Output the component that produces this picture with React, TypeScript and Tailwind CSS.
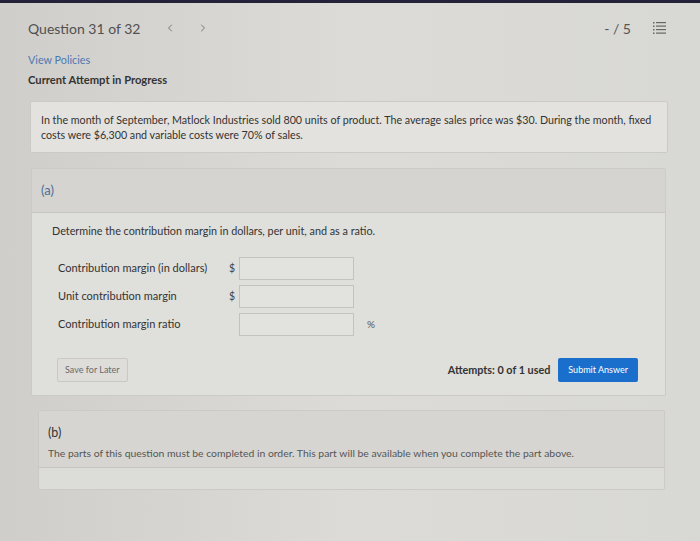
import { ChevronLeft, ChevronRight } from 'lucide-react';

function ListIcon() {
  return (
    <svg width="14" height="14" viewBox="0 0 14 14" className="text-[#666]">
      <g fill="currentColor">
        <rect x="0" y="1" width="1.5" height="1.5" />
        <rect x="0" y="4.5" width="1.5" height="1.5" />
        <rect x="0" y="8" width="1.5" height="1.5" />
        <rect x="0" y="11.5" width="1.5" height="1.5" />
        <rect x="3" y="1" width="10" height="1.2" />
        <rect x="3" y="4.5" width="10" height="1.2" />
        <rect x="3" y="8" width="10" height="1.2" />
        <rect x="3" y="11.5" width="10" height="1.2" />
      </g>
    </svg>
  );
}

export default function App() {
  const rows = [
    { label: 'Contribution margin (in dollars)', pre: '$', post: '' },
    { label: 'Unit contribution margin', pre: '$', post: '' },
    { label: 'Contribution margin ratio', pre: '', post: '%' },
  ];

  return (
    <div className="w-[700px] h-[541px] overflow-hidden bg-gradient-to-r from-[#cfcecb] via-[#dcdbd7] to-[#d8d8d4] font-['Lato','Open_Sans',sans-serif] text-[#3a3a3a]">
      <div className="h-[3px] bg-[#23223a]" />

      {/* header */}
      <div className="h-[47px] pt-[3px] flex items-center pl-[28px] pr-[33px]">
        <span className="text-[14px] text-[#505050]">Question 31 of 32</span>
        <ChevronLeft className="ml-[24px] w-[12px] h-[12px] text-[#777]" strokeWidth={2} />
        <ChevronRight className="ml-[21px] w-[12px] h-[12px] text-[#777]" strokeWidth={2} />
        <span className="ml-auto text-[14px] text-[#555]">- / 5</span>
        <span className="ml-[22px]"><ListIcon /></span>
      </div>

      <div className="pl-[28px] pr-[32px]">
        <div className="pt-[2px] text-[10.8px] text-[#4c78b0]">View Policies</div>
        <div className="mt-[4px] text-[11.2px] font-bold text-[#333]">Current Attempt in Progress</div>

        {/* problem */}
        <div className="mt-[12px] ml-[2px] border border-[#cbcac6] bg-[#e3e2de] rounded-[2px] pl-[10px] pr-[4px] pt-[10px] pb-[10px] text-[10.7px] leading-[15px] text-[#333]">
          In the month of September, Matlock Industries sold 800 units of product. The average sales price was $30. During the month, fixed costs were $6,300 and variable costs were 70% of sales.
        </div>

        {/* part a */}
        <div className="mt-[15px] ml-[3px] mr-[2px] border border-[#cbcac6] rounded-[2px] bg-[#dfdfdb]">
          <div className="h-[44px] bg-[#d5d4d0] border-b border-[#c6c5c1] flex items-center px-[9px] text-[13px] text-[#4c6f98]">
            (a)
          </div>
          <div className="pl-[20px] pr-[27px] pt-[10px] pb-[13px]">
            <div className="text-[10.8px] text-[#333]">Determine the contribution margin in dollars, per unit, and as a ratio.</div>
            <div className="mt-[18px] pl-[6px] flex flex-col gap-[5px]">
              {rows.map((r) => (
                <div key={r.label} className="flex items-center h-[23px]">
                  <span className="w-[171px] text-[11px] text-[#333]">{r.label}</span>
                  <span className="w-[10px] text-[10.5px] text-[#444]">{r.pre}</span>
                  <div className="w-[115px] h-[23px] border border-[#c3c2be] bg-[#e2e2de]" />
                  <span className="ml-[13px] text-[10px] text-[#555]">{r.post}</span>
                </div>
              ))}
            </div>
            <div className="mt-[22px] flex items-center">
              <button className="ml-[5px] h-[24px] px-[7px] border border-[#c9c8c4] rounded-[2px] bg-[#dedddA] text-[9px] text-[#6a6a6a]">
                Save for Later
              </button>
              <span className="ml-auto text-[10.8px] font-bold text-[#333]">Attempts: 0 of 1 used</span>
              <button className="ml-[8px] h-[24px] px-[10px] rounded-[2px] bg-[#1a6fcc] text-[9px] text-white">
                Submit Answer
              </button>
            </div>
          </div>
        </div>

        {/* part b */}
        <div className="mt-[14px] ml-[10px] mr-[3px] border border-[#cbcac6] rounded-[2px] bg-[#dcdcd8]">
          <div className="bg-[#d6d5d1] border-b border-[#c6c5c1] px-[9px] pt-[14px] pb-[7px]">
            <div className="text-[12.5px] leading-[16px] text-[#333]">(b)</div>
            <div className="mt-[5px] text-[10.4px] leading-[14px] text-[#555]">
              The parts of this question must be completed in order. This part will be available when you complete the part above.
            </div>
          </div>
          <div className="h-[21px]" />
        </div>
      </div>
    </div>
  );
}
